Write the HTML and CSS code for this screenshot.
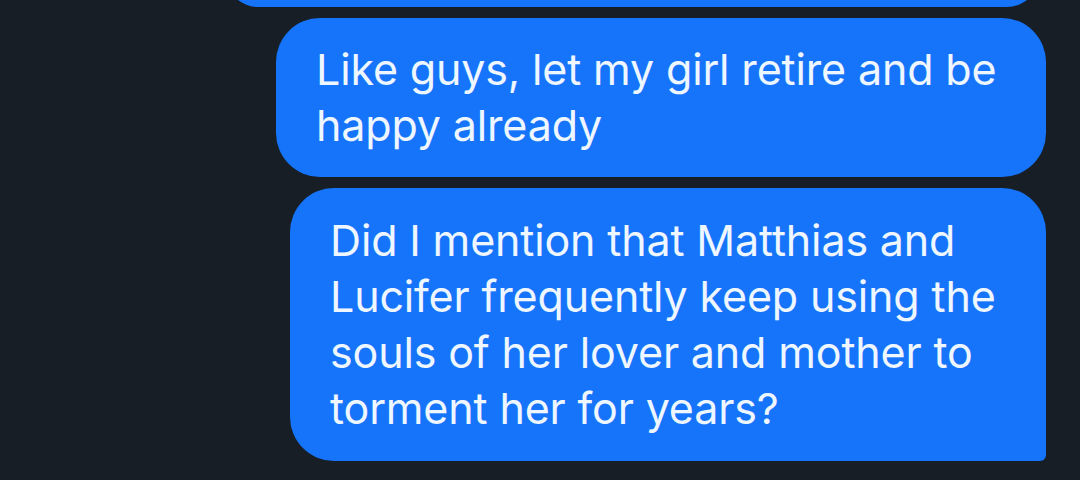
FILE: index.html
```html
<!DOCTYPE html>
<html lang="en">
<head>
<meta charset="utf-8">
<link rel="stylesheet" href="styles.css">
</head>
<body>
<div class="thread">
  <div class="bubble bubble-prev"></div>
  <div class="bubble bubble-a">Like guys, let my girl retire and be happy already</div>
  <div class="bubble bubble-b">Did I mention that Matthias and Lucifer frequently keep using the souls of her lover and mother to torment her for years?</div>
</div>
</body>
</html>
```

FILE: styles.css
```css
html, body {
  margin: 0;
  padding: 0;
  background: #171e26;
  width: 1080px;
  height: 480px;
  overflow: hidden;
}
.thread {
  display: flex;
  flex-direction: column;
  align-items: flex-end;
  gap: 11px;
  padding-right: 34px;
  margin-top: -60px;
}
.bubble {
  box-sizing: border-box;
  background: #1674fa;
  color: #eef6ff;
  font-family: Inter, "Noto Sans", sans-serif;
  font-size: 43px;
  letter-spacing: -0.15px;
  line-height: 56px;
  border-radius: 44px;
  padding: 23px 40px 24px 40px;
}
.bubble-prev {
  width: 815px;
  height: 67px;
  margin-right: 6px;
}
.bubble-a {
  width: 770px;
}
.bubble-b {
  width: 756px;
  padding: 24px 30px 25px 40px;
  border-bottom-right-radius: 6px;
}
```
